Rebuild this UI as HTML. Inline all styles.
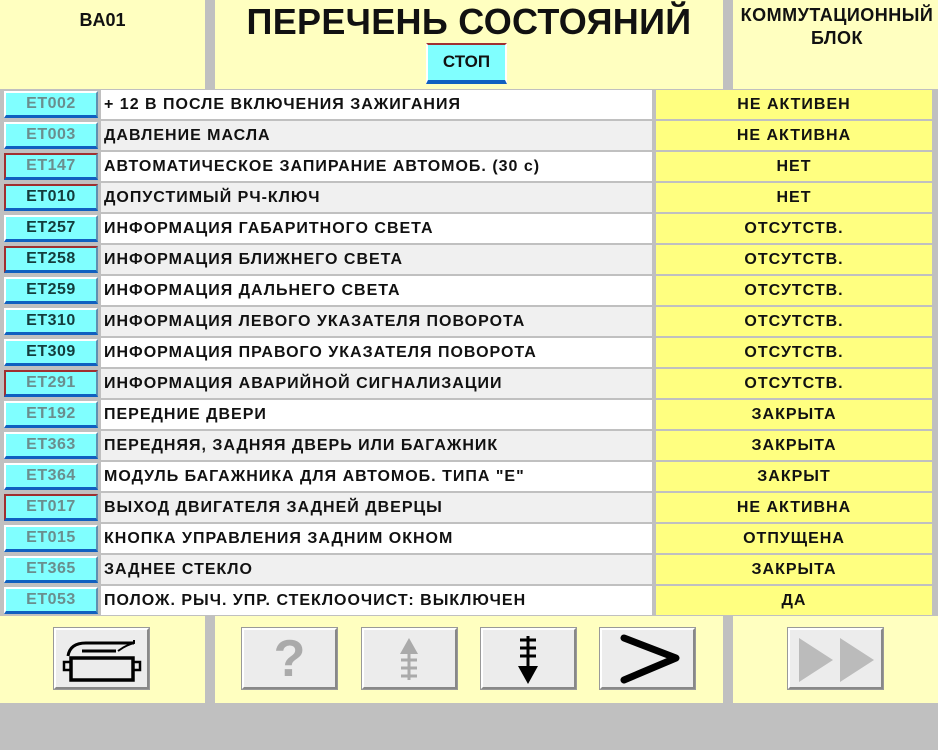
<!DOCTYPE html><html><head><meta charset="utf-8"><style>
*{margin:0;padding:0;box-sizing:border-box}
body{width:938px;height:750px;background:#c0c0c0;position:relative;overflow:hidden;font-family:"Liberation Sans",sans-serif;font-weight:bold;color:#111}
.a{position:absolute}
.p{background:#ffffc0}
.code{position:absolute;left:4px;width:94px;height:27px;background:#80ffff;border:2px solid #fff;border-bottom:3px solid #1060c0;border-right:2px solid #6090b0;font-size:16px;letter-spacing:0.5px;text-align:center;line-height:22px;color:#6a8e8e}
.code.r{border-top-color:#a03030;border-left-color:#a03030}
.code.k{color:#143c3c}
.d{position:absolute;left:101px;width:551px;height:29px;font-size:16px;letter-spacing:1px;line-height:29px;padding-left:3px;background:#fff;white-space:nowrap}
.d.g{background:#f0f0f0}
.v{position:absolute;left:656px;width:276px;height:29px;background:#ffff80;font-size:16px;letter-spacing:1px;line-height:29px;text-align:center}
.b{position:absolute;top:628px;width:95px;height:61px;background:#ececec;border:2px solid #fff;border-right-color:#888;border-bottom-color:#888;outline:1px solid #999}
</style></head><body>
<div class="a p" style="left:0;top:0;width:205px;height:89px"></div>
<div class="a p" style="left:215px;top:0;width:508px;height:89px"></div>
<div class="a p" style="left:733px;top:0;width:205px;height:89px;overflow:hidden"></div>
<div class="a" style="left:0;top:10px;width:205px;text-align:center;font-size:18px">BA01</div>
<div class="a" style="left:215px;top:1px;width:508px;text-align:center;font-size:36px;letter-spacing:0.3px">ПЕРЕЧЕНЬ СОСТОЯНИЙ</div>
<div class="a" style="left:426px;top:43px;width:81px;height:41px;background:#80ffff;border:2px solid #fff;border-top-color:#a03030;border-bottom:4px solid #1060c0;font-size:17px;text-align:center;line-height:34px">СТОП</div>
<div class="a" style="left:733px;top:4px;width:205px;height:80px;overflow:hidden;font-size:18px;letter-spacing:0.5px;text-align:center;line-height:23px"><div style="margin-left:-16px;width:240px">КОММУТАЦИОННЫЙ<br>БЛОК</div></div>
<div id="rows"></div>
<div class="a p" style="left:0;top:616px;width:205px;height:87px"></div>
<div class="a p" style="left:215px;top:616px;width:508px;height:87px"></div>
<div class="a p" style="left:733px;top:616px;width:205px;height:87px"></div>
<div class="b" style="left:54px"><svg width="91" height="57" viewBox="0 0 91 57"><path d="M12 26 Q14 13 30 13 L78 13" fill="none" stroke="#000" stroke-width="3"/><path d="M26 21 L60 21" stroke="#000" stroke-width="3"/><rect x="15" y="28" width="62" height="22" fill="none" stroke="#000" stroke-width="3.5"/><rect x="8" y="32" width="7" height="8" fill="none" stroke="#000" stroke-width="2.5"/><rect x="77" y="32" width="7" height="8" fill="none" stroke="#000" stroke-width="2.5"/><path d="M62 21 Q70 15 78 13 L78 10" fill="none" stroke="#000" stroke-width="2"/></svg></div>
<div class="b" style="left:242px;text-align:center;font-size:52px;line-height:58px;color:#aaa">?</div>
<div class="b" style="left:362px"><svg width="91" height="57" viewBox="0 0 91 57"><path d="M45 8 L36 24 L54 24Z" fill="#aaa"/><path d="M45 22 V50 M37 30 H53 M37 38 H53 M37 46 H53" stroke="#aaa" stroke-width="3"/></svg></div>
<div class="b" style="left:481px"><svg width="91" height="57" viewBox="0 0 91 57"><path d="M45 6 V40 M37 10 H53 M37 18 H53 M37 26 H53" stroke="#000" stroke-width="3"/><path d="M45 54 L35 36 L55 36Z" fill="#000"/></svg></div>
<div class="b" style="left:600px"><svg width="91" height="57" viewBox="0 0 91 57"><path d="M22 8 L74 28 L22 50" fill="none" stroke="#000" stroke-width="7" stroke-linecap="round" stroke-linejoin="round"/></svg></div>
<div class="b" style="left:788px"><svg width="91" height="57" viewBox="0 0 91 57"><path d="M9 8 L43 30 L9 52Z M50 8 L84 30 L50 52Z" fill="#bbb"/></svg></div>
<script>
var R=[["ET002","+ 12 В ПОСЛЕ ВКЛЮЧЕНИЯ ЗАЖИГАНИЯ","НЕ АКТИВЕН",""],["ET003","ДАВЛЕНИЕ МАСЛА","НЕ АКТИВНА",""],["ET147","АВТОМАТИЧЕСКОЕ ЗАПИРАНИЕ АВТОМОБ. (30 с)","НЕТ","r"],["ET010","ДОПУСТИМЫЙ РЧ-КЛЮЧ","НЕТ","r k"],["ET257","ИНФОРМАЦИЯ ГАБАРИТНОГО СВЕТА","ОТСУТСТВ.","k"],["ET258","ИНФОРМАЦИЯ БЛИЖНЕГО СВЕТА","ОТСУТСТВ.","r k"],["ET259","ИНФОРМАЦИЯ ДАЛЬНЕГО СВЕТА","ОТСУТСТВ.","k"],["ET310","ИНФОРМАЦИЯ ЛЕВОГО УКАЗАТЕЛЯ ПОВОРОТА","ОТСУТСТВ.","k"],["ET309","ИНФОРМАЦИЯ ПРАВОГО УКАЗАТЕЛЯ ПОВОРОТА","ОТСУТСТВ.","k"],["ET291","ИНФОРМАЦИЯ АВАРИЙНОЙ СИГНАЛИЗАЦИИ","ОТСУТСТВ.","r"],["ET192","ПЕРЕДНИЕ ДВЕРИ","ЗАКРЫТА",""],["ET363","ПЕРЕДНЯЯ, ЗАДНЯЯ ДВЕРЬ ИЛИ БАГАЖНИК","ЗАКРЫТА",""],["ET364","МОДУЛЬ БАГАЖНИКА ДЛЯ АВТОМОБ. ТИПА \"E\"","ЗАКРЫТ",""],["ET017","ВЫХОД ДВИГАТЕЛЯ ЗАДНЕЙ ДВЕРЦЫ","НЕ АКТИВНА","r"],["ET015","КНОПКА УПРАВЛЕНИЯ ЗАДНИМ ОКНОМ","ОТПУЩЕНА",""],["ET365","ЗАДНЕЕ СТЕКЛО","ЗАКРЫТА",""],["ET053","ПОЛОЖ. РЫЧ. УПР. СТЕКЛООЧИСТ: ВЫКЛЮЧЕН","ДА",""]];
var h="";R.forEach(function(r,i){var t=90+31*i;h+='<div class="code '+r[3]+'" style="top:'+(t+1)+'px">'+r[0]+'</div><div class="d'+(i%2?' g':'')+'" style="top:'+t+'px">'+r[1]+'</div><div class="v" style="top:'+t+'px">'+r[2]+'</div>';});
document.getElementById("rows").innerHTML=h;
</script>
</body></html>
